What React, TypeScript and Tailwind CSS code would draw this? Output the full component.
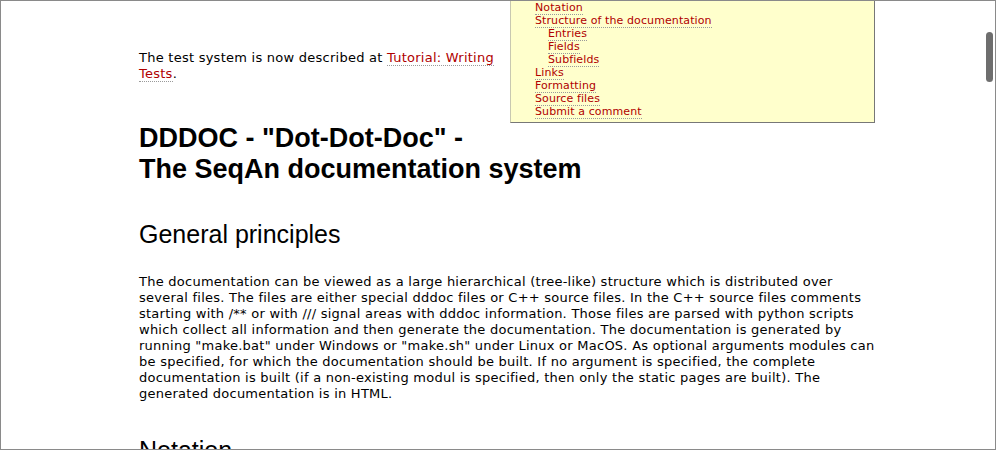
const toc: { label: string; sub?: boolean }[] = [
  { label: "Notation" },
  { label: "Structure of the documentation" },
  { label: "Entries", sub: true },
  { label: "Fields", sub: true },
  { label: "Subfields", sub: true },
  { label: "Links" },
  { label: "Formatting" },
  { label: "Source files" },
  { label: "Submit a comment" },
];

const link = "text-[#b00000] border-b border-dotted border-[#9a9a9a]";

export default function App() {
  return (
    <div className="relative h-[450px] w-[996px] overflow-hidden border border-[#8a8a8a] bg-white text-black [font-family:'DejaVu_Sans',Verdana,sans-serif] text-[13px] leading-[16px] tracking-[0.25px]">
      <div className="ml-[138px] w-[736px]">
        <div className="float-right ml-3 w-[365px] border-x border-b border-l-[#c8c8b0] border-r-[#777] border-b-[#777] bg-[#ffffcc] pb-[4px] pl-[24px] text-[11px] leading-[13px] tracking-[0.1px]">
          <ul>
            {toc.map((t) => (
              <li key={t.label} className={t.sub ? "pl-[13px]" : ""}>
                <a href="#" className={link}>
                  {t.label}
                </a>
              </li>
            ))}
          </ul>
        </div>

        <p className="pt-[49px]">
          The test system is now described at{" "}
          <a href="#" className={link}>
            Tutorial: Writing Tests
          </a>
          .
        </p>

        <h1 className="mt-[41px] [font-family:'Liberation_Sans',Arial,sans-serif] text-[27px] font-bold leading-[31px] tracking-normal">
          DDDOC - "Dot-Dot-Doc" -
          <br />
          The SeqAn documentation system
        </h1>

        <h2 className="mt-[35px] [font-family:'Liberation_Sans',Arial,sans-serif] text-[25px] leading-[28px] tracking-normal">
          General principles
        </h2>

        <p className="mt-[26px]">
          The documentation can be viewed as a large hierarchical (tree-like) structure which is distributed over
          several files. The files are either special dddoc files or C++ source files. In the C++ source files comments
          starting with /** or with /// signal areas with dddoc information. Those files are parsed with python scripts
          which collect all information and then generate the documentation. The documentation is generated by running
          "make.bat" under Windows or "make.sh" under Linux or MacOS. As optional arguments modules can be specified, for
          which the documentation should be built. If no argument is specified, the complete documentation is built (if
          a non-existing modul is specified, then only the static pages are built). The generated documentation is in
          HTML.
        </p>

        <h2 className="mt-[34px] [font-family:'Liberation_Sans',Arial,sans-serif] text-[25px] leading-[28px] tracking-normal">
          Notation
        </h2>
      </div>

      <div className="absolute left-[985px] top-[31px] h-[50px] w-[7px] rounded-full bg-[#6e6e6e]" />
    </div>
  );
}
